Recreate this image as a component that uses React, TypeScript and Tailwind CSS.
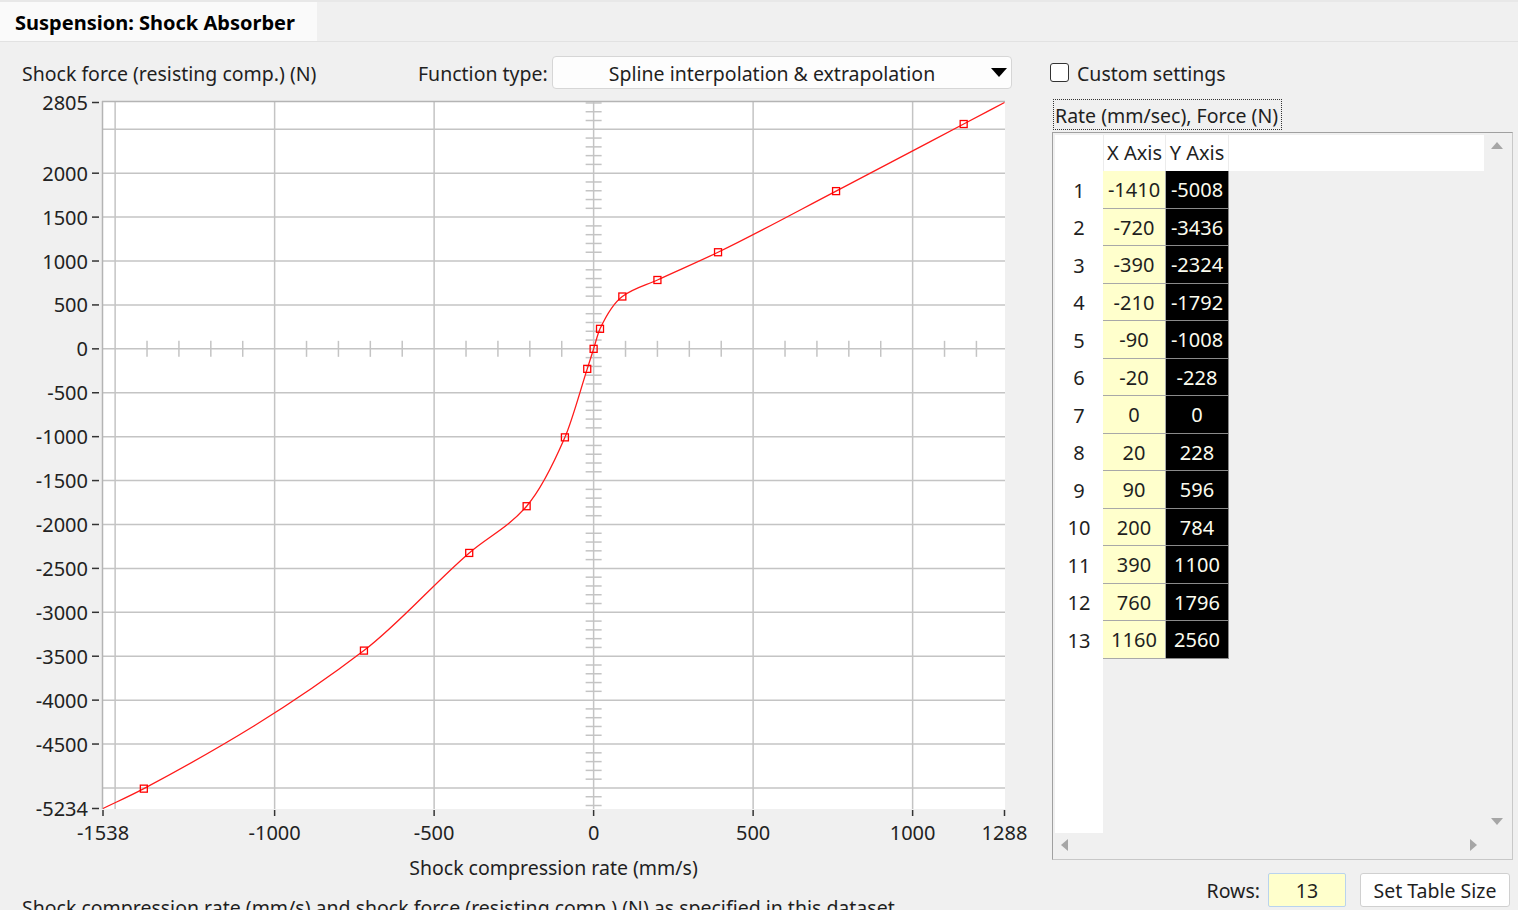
import React from 'react';

type P = [number, number];

const data: P[] = [
  [-1410, -5008],
  [-720, -3436],
  [-390, -2324],
  [-210, -1792],
  [-90, -1008],
  [-20, -228],
  [0, 0],
  [20, 228],
  [90, 596],
  [200, 784],
  [390, 1100],
  [760, 1796],
  [1160, 2560],
];

const X0 = -1538;
const X1 = 1288;
const Y0 = -5234;
const Y1 = 2805;
const L = 103;
const R = 1004.5;
const T = 102.5;
const B = 808.5;
const px = (v: number) => L + ((v - X0) * (R - L)) / (X1 - X0);
const py = (v: number) => T + ((Y1 - v) * (B - T)) / (Y1 - Y0);

// monotone cubic (pchip) through the knots, written as bezier segments
function splinePath(k: P[]) {
  const n = k.length;
  const h: number[] = [];
  const d: number[] = [];
  for (let i = 0; i < n - 1; i++) {
    h.push(k[i + 1][0] - k[i][0]);
    d.push((k[i + 1][1] - k[i][1]) / h[i]);
  }
  const m: number[] = [d[0]];
  for (let i = 1; i < n - 1; i++) {
    if (d[i - 1] * d[i] <= 0) m.push(0);
    else {
      const w1 = 2 * h[i] + h[i - 1];
      const w2 = h[i] + 2 * h[i - 1];
      m.push((w1 + w2) / (w1 / d[i - 1] + w2 / d[i]));
    }
  }
  m.push(d[n - 2]);
  let p = `M${px(k[0][0])},${py(k[0][1])}`;
  for (let i = 0; i < n - 1; i++) {
    const c1x = k[i][0] + h[i] / 3;
    const c1y = k[i][1] + (m[i] * h[i]) / 3;
    const c2x = k[i + 1][0] - h[i] / 3;
    const c2y = k[i + 1][1] - (m[i + 1] * h[i]) / 3;
    p += ` C${px(c1x)},${py(c1y)} ${px(c2x)},${py(c2y)} ${px(k[i + 1][0])},${py(k[i + 1][1])}`;
  }
  return p;
}

const yLabels = [2805, 2000, 1500, 1000, 500, 0, -500, -1000, -1500, -2000, -2500, -3000, -3500, -4000, -4500, -5234];
const xLabels = [-1538, -1000, -500, 0, 500, 1000, 1288];
const yGrid: number[] = [];
for (let v = 2500; v >= -5000; v -= 500) yGrid.push(v);
const xGrid = [-1500, -1000, -500, 0, 500, 1000];
const minorX: number[] = [];
for (let v = -1400; v <= 1200; v += 100) if (v % 500 !== 0) minorX.push(v);
const minorY: number[] = [];
for (let v = -5200; v <= 2800; v += 100) if (v % 500 !== 0) minorY.push(v);

const grid = '#c4c4c4';

function Chart() {
  const curve = splinePath([[X0, Y0], ...data, [X1, Y1]]);
  return (
    <svg width={1040} height={762} viewBox="0 88 1040 762" className="block">
      <rect x={102} y={101} width={903} height={708} fill="#fff" />
      {yGrid.map((v) => (
        <line key={'yg' + v} x1={102} x2={1005} y1={py(v)} y2={py(v)} stroke={grid} strokeWidth={1.5} />
      ))}
      {xGrid.map((v) => (
        <line key={'xg' + v} x1={px(v)} x2={px(v)} y1={101} y2={809} stroke={grid} strokeWidth={1.5} />
      ))}
      <line x1={102} x2={1005} y1={101.5} y2={101.5} stroke="#b4b4b4" strokeWidth={1.5} />
      <line x1={102.5} x2={102.5} y1={101} y2={809} stroke="#b4b4b4" strokeWidth={1.5} />
      {minorX.map((v) => (
        <line key={'mx' + v} x1={px(v)} x2={px(v)} y1={py(0) - 8} y2={py(0) + 8} stroke={grid} strokeWidth={1.5} />
      ))}
      {minorY.map((v) => (
        <line key={'my' + v} x1={px(0) - 8} x2={px(0) + 8} y1={py(v)} y2={py(v)} stroke={grid} strokeWidth={1.5} />
      ))}
      {yLabels.map((v) => (
        <g key={'yl' + v}>
          <line x1={92} x2={99} y1={py(v)} y2={py(v)} stroke="#333" strokeWidth={1.5} />
          <text x={88} y={py(v) + 7.5} textAnchor="end" fontSize={20} fill="#222">
            {v}
          </text>
        </g>
      ))}
      {xLabels.map((v) => (
        <g key={'xl' + v}>
          <line x1={px(v)} x2={px(v)} y1={810} y2={816} stroke="#333" strokeWidth={1.5} />
          <text x={px(v)} y={840} textAnchor="middle" fontSize={20} fill="#222">
            {v}
          </text>
        </g>
      ))}
      <path d={curve} fill="none" stroke="#ff1a1a" strokeWidth={1.3} />
      {data.map(([x, y]) => (
        <rect
          key={'pt' + x}
          x={px(x) - 3.5}
          y={py(y) - 3.5}
          width={7}
          height={7}
          fill="none"
          stroke="#ff0000"
          strokeWidth={1.3}
        />
      ))}
    </svg>
  );
}

function Arrow({ dir }: { dir: 'up' | 'down' | 'left' | 'right' }) {
  const pts = {
    up: '0,7 6,0 12,7',
    down: '0,0 12,0 6,7',
    left: '7,0 7,12 0,6',
    right: '0,0 0,12 7,6',
  }[dir];
  const vertical = dir === 'up' || dir === 'down';
  return (
    <svg width={vertical ? 12 : 7} height={vertical ? 7 : 12} className="block">
      <polygon points={pts} fill="#a6a6a6" />
    </svg>
  );
}

function DataTable() {
  return (
    <div className="ml-[2px] mt-[2px] flex h-[728px] w-[461px] flex-col border border-[#a0a0a0] border-b-[#c8c8c8] border-r-[#c8c8c8] p-[2px] text-[20px]">
      <div className="flex h-[698px]">
        <div className="flex w-[429px]">
          <div className="flex w-[48px] flex-col bg-white">
            <div className="h-[36px] shrink-0" />
            {data.map((_, i) => (
              <div key={i} className="flex h-[37.5px] shrink-0 items-center justify-center pt-[2px]">
                {i + 1}
              </div>
            ))}
          </div>
          <div className="flex flex-1 flex-col bg-[#f0f0f0]">
            <div className="flex h-[36px] shrink-0 bg-white">
              <div className="flex w-[63px] items-center justify-center border-x border-[#ececec]">X Axis</div>
              <div className="flex w-[63px] items-center justify-center border-r border-[#ececec]">Y Axis</div>
            </div>
            {data.map(([x, y], i) => (
              <div key={i} className="flex h-[37.5px] shrink-0">
                <div className="flex w-[63px] items-center justify-center border-b border-r border-[#a8a8a8] bg-[#ffffcc] pt-[2px]">
                  {x}
                </div>
                <div className="flex w-[63px] items-center justify-center border-b border-r border-[#8a8a8a] bg-black pt-[2px] text-[#fbfbee]">
                  {y}
                </div>
              </div>
            ))}
          </div>
        </div>
        <div className="flex w-[26px] flex-col items-center justify-between bg-[#f0f0f0] pb-[8px] pt-[7px]">
          <Arrow dir="up" />
          <Arrow dir="down" />
        </div>
      </div>
      <div className="flex h-[24px] w-[429px] items-center justify-between pl-[6px] pr-[7px]">
        <Arrow dir="left" />
        <Arrow dir="right" />
      </div>
    </div>
  );
}

export default function App() {
  return (
    <div className="h-[910px] w-[1518px] overflow-hidden bg-[#f0f0f0] font-['Noto_Sans','Open_Sans',sans-serif] text-[19.5px] leading-none text-[#1f1f1f]">
      <div className="flex h-[42px] items-end border-b border-[#e2e2e2] border-t-2 border-t-[#e8e8e8]">
        <div className="flex h-[39px] w-[317px] items-center bg-[#fafafa] pl-[15px] pt-[2px] text-[20px] font-bold text-black">
          Suspension: Shock Absorber
        </div>
      </div>
      <div className="flex">
        <div className="flex w-[1040px] flex-col">
          <div className="flex h-[46px] items-start pl-[22px] pt-[14px]">
            <div className="flex h-[33px] w-[396px] items-center pt-[3px]">Shock force (resisting comp.) (N)</div>
            <div className="flex h-[33px] w-[134px] items-center pt-[3px]">Function type:</div>
            <div className="flex h-[33px] w-[460px] items-center rounded-[4px] border border-[#d6d6d6] bg-[#fdfdfd]">
              <div className="flex-1 pt-[3px] text-center">Spline interpolation &amp; extrapolation</div>
              <svg width={16} height={9} className="mr-[4px] block">
                <polygon points="0,0 16,0 8,9" fill="#000" />
              </svg>
            </div>
          </div>
          <Chart />
          <div className="flex h-[34px] items-center pl-[102px]">
            <div className="w-[903px] pt-[2px] text-center">Shock compression rate (mm/s)</div>
          </div>
          <div className="mt-[14px] pl-[22px]">
            Shock compression rate (mm/s) and shock force (resisting comp.) (N) as specified in this dataset.
          </div>
        </div>
        <div className="flex flex-1 flex-col pl-[10px] pt-[14px]">
          <div className="flex h-[33px] items-center gap-[8px]">
            <div className="h-[19px] w-[19px] rounded-[3px] border-[1.5px] border-[#333] bg-white" />
            <span className="pt-[2px]">Custom settings</span>
          </div>
          <div className="ml-[3px] mt-[10px] flex h-[31px] w-[229px] items-center border border-dotted border-[#333] pl-[1px] pt-[2px]">
            Rate (mm/sec), Force (N)
          </div>
          <DataTable />
          <div className="mt-[13px] flex h-[34px] items-center justify-end pr-[8px]">
            <span className="mr-[8px] pt-[2px]">Rows:</span>
            <div className="flex h-[34px] w-[78px] items-center justify-center rounded-[2px] border border-[#b9d3ee] bg-[#ffffcc] pt-[2px]">
              13
            </div>
            <div className="ml-[14px] flex h-[34px] w-[150px] items-center justify-center rounded-[3px] border border-[#d0d0d0] bg-white pt-[2px]">
              Set Table Size
            </div>
          </div>
        </div>
      </div>
    </div>
  );
}
